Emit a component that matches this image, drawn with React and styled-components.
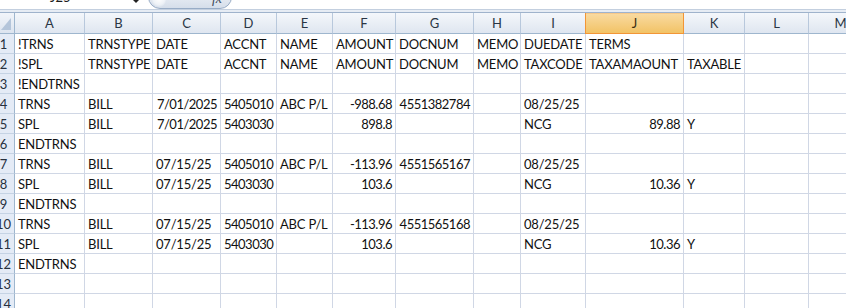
import React from 'react'
import styled, { createGlobalStyle } from 'styled-components'

const GlobalStyle = createGlobalStyle`
html, body {
  margin:0;
  padding:0;
  background:#fff;
}
body {
  width:846px;
  height:308px;
  overflow:hidden;
  font-family: Lato, "Liberation Sans", sans-serif;
}
`

const COLUMNS = [
  ['A', 70], ['B', 68], ['C', 68], ['D', 56], ['E', 56], ['F', 63], ['G', 78],
  ['H', 47], ['I', 65], ['J', 98], ['K', 61], ['L', 64], ['M', 64],
]

const SELECTED_COL = 'J'

// dates typed as real dates sit on the right, like numbers
const date = (v) => ({ right: v })

const ROWS = [
  ['!TRNS', 'TRNSTYPE', 'DATE', 'ACCNT', 'NAME', 'AMOUNT', 'DOCNUM', 'MEMO', 'DUEDATE', 'TERMS'],
  ['!SPL', 'TRNSTYPE', 'DATE', 'ACCNT', 'NAME', 'AMOUNT', 'DOCNUM', 'MEMO', 'TAXCODE', 'TAXAMAOUNT', 'TAXABLE'],
  ['!ENDTRNS'],
  ['TRNS', 'BILL', date('7/01/2025'), 5405010, 'ABC P/L', -988.68, 4551382784, '', '08/25/25'],
  ['SPL', 'BILL', date('7/01/2025'), 5403030, '', 898.8, '', '', 'NCG', 89.88, 'Y'],
  ['ENDTRNS'],
  ['TRNS', 'BILL', '07/15/25', 5405010, 'ABC P/L', -113.96, 4551565167, '', '08/25/25'],
  ['SPL', 'BILL', '07/15/25', 5403030, '', 103.6, '', '', 'NCG', 10.36, 'Y'],
  ['ENDTRNS'],
  ['TRNS', 'BILL', '07/15/25', 5405010, 'ABC P/L', -113.96, 4551565168, '', '08/25/25'],
  ['SPL', 'BILL', '07/15/25', 5403030, '', 103.6, '', '', 'NCG', 10.36, 'Y'],
  ['ENDTRNS'],
  [],
  [],
]

const Window = styled.div`
display:flex;
flex-direction:column;
width:846px;
height:308px;
overflow:hidden;
background:#fff;
`

const FormulaBar = styled.div`
display:flex;
flex-direction:row;
align-items:flex-end;
height:9px;
overflow:hidden;
border-bottom:1px solid #c3cfdf;
background:#fff;
flex-shrink:0;
`

const NameBox = styled.div`
display:flex;
align-items:flex-end;
justify-content:space-between;
width:148px;
height:9px;
font-size:13px;
color:#1c1c1c;
`

const NameText = styled.span`
margin-left:50px;
margin-bottom:5px;
line-height:14px;
`

const DropArrow = styled.span`
width:0;
height:0;
margin-right:9px;
margin-bottom:6px;
border-left:3px solid transparent;
border-right:3px solid transparent;
border-top:3px solid #222;
`

const FxCapsule = styled.div`
position:relative;
display:flex;
align-items:flex-end;
justify-content:flex-end;
width:84px;
height:24px;
box-sizing:border-box;
border:1px solid #98acc6;
border-radius:12px;
background:linear-gradient(#f6f8fb, #d5deea);
padding-right:9px;
`

const FxGlow = styled.span`
position:absolute;
left:3px;
bottom:1px;
width:14px;
height:14px;
border-radius:50%;
background:radial-gradient(circle at 50% 40%, #ffffff 0%, #eef2f7 55%, #c9d4e3 100%);
`

const FxLabel = styled.span`
font-family:"Liberation Serif", serif;
font-style:italic;
font-size:14px;
color:#3d4b5c;
margin-bottom:1px;
line-height:16px;
`

const BarGap = styled.div`
height:2px;
background:#e6ecf4;
flex-shrink:0;
`

const Sheet = styled.div`
display:grid;
grid-template-columns:15px ${COLUMNS.map(([, w]) => `${w}px`).join(' ')};
grid-template-rows:21px;
grid-auto-rows:20px;
border-top:1px solid #9fb3cc;
width:max-content;
`

const Corner = styled.div`
display:flex;
align-items:flex-end;
justify-content:flex-end;
box-sizing:border-box;
border-right:1px solid #9eb6ce;
border-bottom:1px solid #9eb6ce;
background:linear-gradient(#f2f5fa, #dce4ef);
padding:0 3px 3px 0;
`

const ColHead = styled.div`
position:relative;
box-sizing:border-box;
border-right:1px solid ${(p) => (p.$selected ? '#f29536' : '#b8c8dc')};
border-bottom:1px solid ${(p) => (p.$selected ? '#f29536' : '#9eb6ce')};
background:${(p) => (p.$selected
    ? 'linear-gradient(#f9dba3, #f2c366)'
    : 'linear-gradient(#f4f7fb, #dfe6f0)')};
box-shadow:${(p) => (p.$selected ? '-1px 0 0 #f29536, inset 0 1px 0 #f7c98a' : 'none')};
text-align:center;
font-size:13px;
line-height:20px;
color:${(p) => (p.$selected ? '#3a2d12' : '#2a3544')};
`

const RowHead = styled.div`
display:flex;
justify-content:center;
box-sizing:border-box;
padding-right:7px;
overflow:hidden;
border-right:1px solid #9eb6ce;
border-bottom:1px solid #c5d3e4;
background:#e4ebf6;
font-size:13px;
line-height:20px;
color:#27313e;
white-space:nowrap;
`

const Cell = styled.div`
box-sizing:border-box;
border-right:1px solid #d0d7e5;
border-bottom:1px solid #d0d7e5;
padding:0 3px 0 3px;
font-size:13px;
letter-spacing:${(p) => (p.$right ? '-0.5px' : '-0.2px')};
line-height:20px;
color:#111;
white-space:nowrap;
text-align:${(p) => (p.$right ? 'right' : 'left')};
`

function cellContent(value) {
  if (value === undefined || value === null) return { text: '', right: false }
  if (typeof value === 'number') return { text: String(value), right: true }
  if (typeof value === 'object') return { text: value.right, right: true }
  return { text: value, right: false }
}

const SelectAll = () => (
  <svg width="10" height="12" viewBox="0 0 10 12">
    <polygon points="10,0 10,12 0,12" fill="#b4c5da" />
  </svg>
)

const App = () => {
  return (
    <Window>
      <GlobalStyle />
      <FormulaBar>
        <NameBox>
          <NameText>J25</NameText>
          <DropArrow />
        </NameBox>
        <FxCapsule>
          <FxGlow />
          <FxLabel>fx</FxLabel>
        </FxCapsule>
      </FormulaBar>
      <BarGap />
      <Sheet>
        <Corner><SelectAll /></Corner>
        {COLUMNS.map(([name]) => (
          <ColHead key={name} $selected={name === SELECTED_COL}>{name}</ColHead>
        ))}
        {ROWS.map((row, r) => (
          <React.Fragment key={r}>
            <RowHead>{r + 1}</RowHead>
            {COLUMNS.map(([name], c) => {
              const { text, right } = cellContent(row[c])
              return <Cell key={name} $right={right}>{text}</Cell>
            })}
          </React.Fragment>
        ))}
      </Sheet>
    </Window>
  )
}

export default App
